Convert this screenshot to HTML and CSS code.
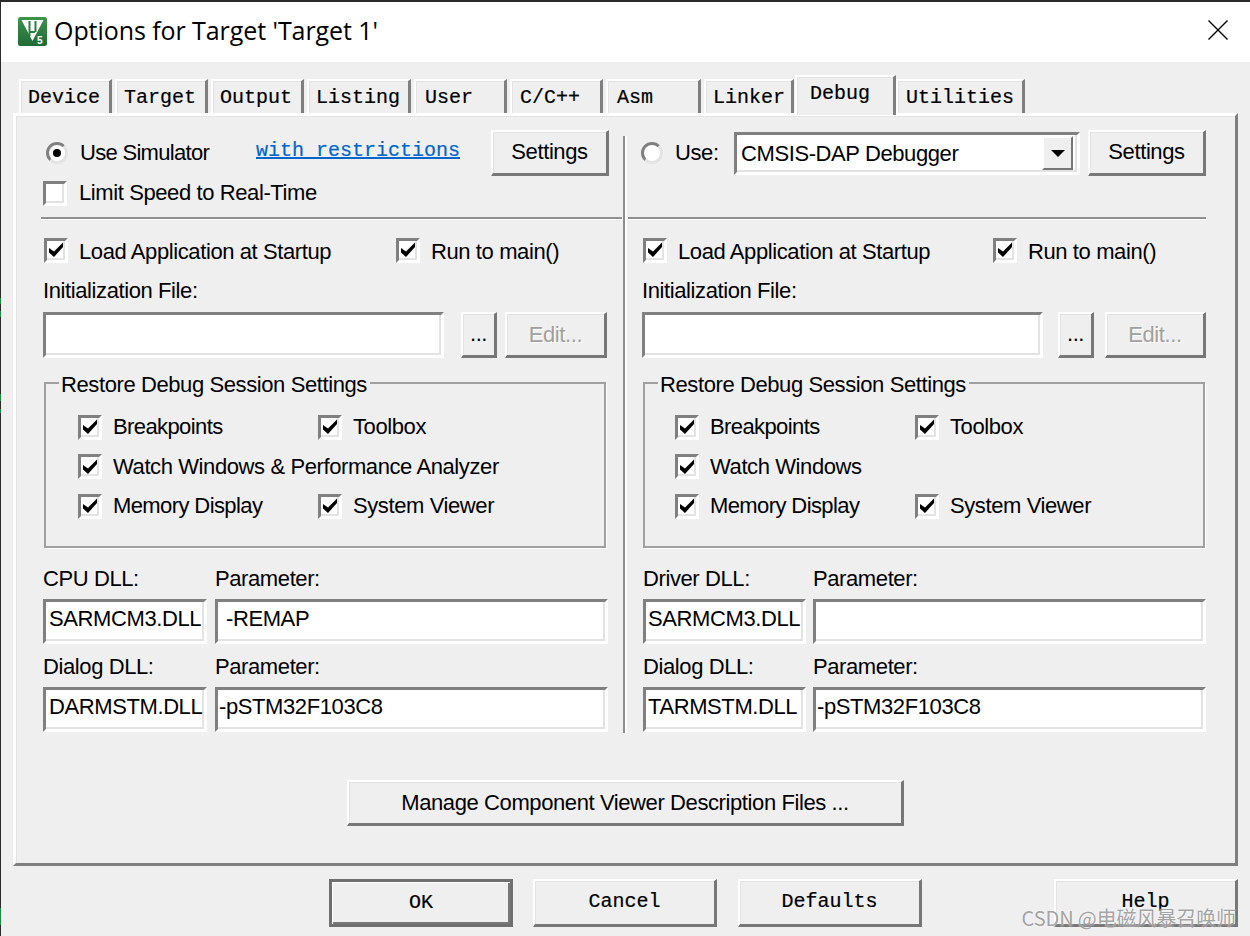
FILE: index.html
```html
<!DOCTYPE html>
<html lang="en">
<head>
<meta charset="utf-8">
<title>Options for Target 'Target 1'</title>
<link rel="stylesheet" href="styles.css">
</head>
<body>
<svg class="defs" width="0" height="0"><symbol id="tick" viewBox="0 0 16 16"><path d="M1 6 L1 10.5 L6 15 L15 5 L15 0.5 L6 9.5 Z" fill="#000"/></symbol></svg>
<div class="dialog">
  <span class="edge"></span>
  <header class="titlebar">
    <svg class="logo" viewBox="0 0 29 29">
      <defs><linearGradient id="lg" x1="0" y1="0" x2="0" y2="1"><stop offset="0" stop-color="#3c9449"/><stop offset="1" stop-color="#1f6b35"/></linearGradient></defs>
      <rect width="29" height="29" rx="2.5" fill="url(#lg)"/>
      <path d="M3.5 3 H25.5 L14.5 24 Z" fill="#fff"/>
      <path d="M11.5 4 V19 M11.5 15 H17 M17.5 4 V15" fill="none" stroke="#2a7f3f" stroke-width="2"/>
      <text x="19" y="27" class="logo5">5</text>
    </svg>
    <span class="title">Options for Target 'Target 1'</span>
    <svg class="close" viewBox="0 0 20 20"><path d="M0.5 0.5 L19.5 19.5 M19.5 0.5 L0.5 19.5" stroke="#000" stroke-width="1.4" fill="none"/></svg>
  </header>

  <nav class="tabs">
    <span class="tab w93">Device</span><span class="tab w94">Target</span><span class="tab w94">Output</span><span class="tab w104">Listing</span><span class="tab w94 pad9">User</span><span class="tab w94 pad8">C/C++</span><span class="tab w95 pad9">Asm</span><span class="tab w90">Linker</span><span class="tab tab-on">Debug</span><span class="tab w128 pad8">Utilities</span>
  </nav>

  <section class="panel">
    <div class="panes">
      <div class="pane pane-l">
        <div class="toprow">
          <span class="radio on"></span><span class="lbl sim">Use Simulator</span>
          <span class="link">with restrictions</span>
          <span class="btn settings">Settings</span>
        </div>
        <div class="row limit"><span class="check"></span><span class="lbl">Limit Speed to Real-Time</span></div>
        <hr class="rule">
        <div class="row load"><span class="check"><svg class="tick"><use href="#tick"/></svg></span><span class="lbl grow-l">Load Application at Startup</span><span class="check"><svg class="tick"><use href="#tick"/></svg></span><span class="lbl">Run to main()</span></div>
        <div class="lbl init">Initialization File:</div>
        <div class="filerow">
          <span class="field file"></span><span class="btn dots">...</span><span class="btn edit">Edit...</span>
        </div>
        <fieldset class="group">
          <legend class="legend">Restore Debug Session Settings</legend>
          <div class="gridrow"><span class="check"><svg class="tick"><use href="#tick"/></svg></span><span class="lbl g1">Breakpoints</span><span class="check"><svg class="tick"><use href="#tick"/></svg></span><span class="lbl">Toolbox</span></div>
          <div class="gridrow"><span class="check"><svg class="tick"><use href="#tick"/></svg></span><span class="lbl">Watch Windows &amp; Performance Analyzer</span></div>
          <div class="gridrow"><span class="check"><svg class="tick"><use href="#tick"/></svg></span><span class="lbl g1">Memory Display</span><span class="check"><svg class="tick"><use href="#tick"/></svg></span><span class="lbl">System Viewer</span></div>
        </fieldset>
        <div class="dlls">
          <span class="lbl">CPU DLL:</span><span class="lbl">Parameter:</span>
          <span class="field dll">SARMCM3.DLL</span><span class="field param indent">-REMAP</span>
          <span class="lbl">Dialog DLL:</span><span class="lbl">Parameter:</span>
          <span class="field dll">DARMSTM.DLL</span><span class="field param">-pSTM32F103C8</span>
        </div>
      </div>
      <div class="divider"></div>
      <div class="pane pane-r">
        <div class="toprow">
          <span class="radio"></span><span class="lbl use">Use:</span>
          <span class="field combo"><span class="combotext">CMSIS-DAP Debugger</span><span class="comboarrow"></span></span>
          <span class="btn settings">Settings</span>
        </div>
        <div class="row limit blank"></div>
        <hr class="rule">
        <div class="row load"><span class="check"><svg class="tick"><use href="#tick"/></svg></span><span class="lbl grow-l">Load Application at Startup</span><span class="check"><svg class="tick"><use href="#tick"/></svg></span><span class="lbl">Run to main()</span></div>
        <div class="lbl init">Initialization File:</div>
        <div class="filerow">
          <span class="field file"></span><span class="btn dots">...</span><span class="btn edit">Edit...</span>
        </div>
        <fieldset class="group">
          <legend class="legend">Restore Debug Session Settings</legend>
          <div class="gridrow"><span class="check"><svg class="tick"><use href="#tick"/></svg></span><span class="lbl g1">Breakpoints</span><span class="check"><svg class="tick"><use href="#tick"/></svg></span><span class="lbl">Toolbox</span></div>
          <div class="gridrow"><span class="check"><svg class="tick"><use href="#tick"/></svg></span><span class="lbl">Watch Windows</span></div>
          <div class="gridrow"><span class="check"><svg class="tick"><use href="#tick"/></svg></span><span class="lbl g1">Memory Display</span><span class="check"><svg class="tick"><use href="#tick"/></svg></span><span class="lbl">System Viewer</span></div>
        </fieldset>
        <div class="dlls">
          <span class="lbl">Driver DLL:</span><span class="lbl">Parameter:</span>
          <span class="field dll">SARMCM3.DLL</span><span class="field param"></span>
          <span class="lbl">Dialog DLL:</span><span class="lbl">Parameter:</span>
          <span class="field dll">TARMSTM.DLL</span><span class="field param">-pSTM32F103C8</span>
        </div>
      </div>
    </div>
    <div class="managerow"><span class="btn manage">Manage Component Viewer Description Files ...</span></div>
  </section>

  <footer class="actions">
    <span class="btn act ok mono">OK</span><span class="btn act cancel mono">Cancel</span><span class="btn act mono">Defaults</span><span class="btn act help mono">Help</span>
  </footer>
  <span class="watermark">CSDN @电磁风暴召唤师</span>
</div>
</body>
</html>
```
FILE: styles.css
```css
* { box-sizing: border-box; }
html, body { margin: 0; height: 100%; }
body { width: 1250px; height: 936px; overflow: hidden; background: #efefef; font-family: "Liberation Sans", Arial, sans-serif; color: #000; }
.defs { position: absolute; }
.dialog { position: relative; width: 1250px; height: 936px; border-top: 2px solid #2b2b2b; border-left: 1px solid #2b2b2b; background: #efefef; }
.edge { position: absolute; left: -1px; top: -2px; width: 1px; height: 936px; background: linear-gradient(#2b2b2b 0 298px, #1f8a3f 298px 304px, #2b2b2b 304px 311px, #1f8a3f 311px 317px, #2b2b2b 317px 394px, #1f8a3f 394px 401px, #2b2b2b 401px 409px, #1f8a3f 409px 413px, #2b2b2b 413px 908px, #1f8a3f 908px 925px, #2b2b2b 925px); }

.titlebar { height: 60px; background: #fff; display: flex; align-items: center; padding: 0 22px 0 17px; }
.logo { width: 29px; height: 29px; flex: none; margin-top: -2px; }
.logo5 { font: bold 10px "Liberation Sans", sans-serif; fill: #fff; }
.title { font: 25px "Open Sans", sans-serif; letter-spacing: -0.07px; margin-left: 7px; flex: 1; margin-top: -4px; white-space: nowrap; }
.close { width: 20px; height: 20px; margin-top: -4px; }

.tabs { display: flex; align-items: flex-end; height: 51px; padding-left: 18px; }
.tab { height: 34px; font: 20px/34px "Liberation Mono", monospace; -webkit-text-stroke: 0.2px #000; padding-left: 7px; margin-right: 3px; white-space: nowrap; border-top: 2px solid #fff; border-left: 2px solid #fff; border-right: 3px solid #7f7f7f; box-shadow: inset 1px 1px 0 #e3e3e3; }
.w93 { width: 93px; } .w94 { width: 93px; } .w95 { width: 95px; } .w90 { width: 90px; margin-right: 0; } .w104 { width: 104px; } .w128 { width: 129px; margin-right: 0; }
.pad8 { padding-left: 8px; } .pad9 { padding-left: 9px; }
.tab-on { width: 101px; height: 40px; line-height: 34px; padding-left: 13px; margin: 0 0 -2px 1px; background: #efefef; position: relative; z-index: 1; margin-right: 0; }

.panel { width: 1225px; height: 753px; margin-left: 12px; border: 3px solid; border-color: #fff #7f7f7f #7f7f7f #fff; box-shadow: inset 1px 1px 0 #e3e3e3; padding: 14px 28px 0 25px; }
.panes { display: flex; height: 600px; }
.pane-l { width: 582px; flex: none; }
.pane-r { width: 578px; flex: none; padding-left: 12px; }
.divider { width: 5px; flex: none; height: 597px; margin-top: 6px; background: linear-gradient(90deg, #8f8f8f 0 2px, #fff 2px 4px, #efefef 4px); }

.lbl { font-size: 22px; letter-spacing: -0.4px; line-height: 26px; white-space: nowrap; }
.toprow { display: flex; align-items: center; height: 46px; }
.radio { width: 22px; height: 22px; flex: none; border-radius: 50%; border: 3px solid; border-color: #808080 #e3e3e3 #e3e3e3 #808080; background: #fff; margin-left: 5px; display: flex; align-items: center; justify-content: center; }
.pane-r .radio { margin-left: 1px; }
.radio.on::after { content: ""; width: 8px; height: 8px; border-radius: 50%; background: #000; }
.sim { margin-left: 12px; width: 176px; letter-spacing: -0.7px; }
.link { font: 20px "Liberation Mono", monospace; -webkit-text-stroke: 0.2px #0066cc; color: #0066cc; text-decoration: underline; width: 235px; margin-top: -6px; }
.btn { display: flex; align-items: center; justify-content: center; border: 2px solid; border-color: #fff #777 #777 #fff; border-width: 2px 3px 3px 2px; box-shadow: inset 1px 1px 0 #e3e3e3; font-size: 22px; letter-spacing: -0.4px; background: #efefef; white-space: nowrap; flex: none; }
.settings { width: 118px; height: 46px; padding-bottom: 2px; }
.use { margin-left: 12px; width: 59px; }
.field { display: flex; align-items: center; flex: none; border: 3px solid; border-color: #808080 #fff #fff #808080; box-shadow: inset -2px -2px 0 #e3e3e3; background: #fff; font-size: 22px; letter-spacing: -0.4px; height: 46px; white-space: nowrap; }
.combo { width: 346px; height: 43px; margin-right: 8px; padding: 2px 4px 0 4px; justify-content: space-between; }
.comboarrow { width: 31px; height: 34px; flex: none; border: 2px solid; border-color: #fff #777 #777 #fff; background: #efefef; margin-top: -2px; display: flex; align-items: center; justify-content: center; }
.comboarrow::after { content: ""; border: 7px solid transparent; border-top: 7px solid #000; border-bottom: 0; }

.row { display: flex; align-items: center; }
.check { width: 24px; height: 25px; flex: none; border: 3px solid; border-color: #808080 #fff #fff #808080; box-shadow: inset -2px -2px 0 #e3e3e3; background: #fff; display: flex; align-items: center; justify-content: center; }
.tick { width: 16px; height: 16px; }
.limit { height: 28px; margin-top: 3px; margin-left: 2px; }
.limit .lbl { margin-left: 12px; }
.rule { height: 3px; border: 0; margin: 10px 0 0; background: linear-gradient(#8f8f8f 0 2px, #fff 2px); }
.pane-l .rule { margin-right: 1px; }
.pane-r .rule { margin-left: -12px; }
.load { height: 26px; margin-top: 19px; padding-left: 3px; }
.load .check { margin-top: -4px; }
.load .lbl { margin-left: 11px; }
.grow-l { width: 317px; }
.pane-r .grow-l { width: 315px; }
.init { margin-top: 13px; padding-left: 2px; }
.filerow { display: flex; margin-top: 8px; padding-left: 2px; }
.file { width: 401px; }
.dots { width: 36px; margin-left: 17px; height: 46px; padding-bottom: 2px; }
.edit { width: 102px; margin-left: 8px; height: 46px; color: #a0a0a0; text-shadow: 1px 1px 0 #fff; }
.pane-r .filerow .dots { margin-left: 15px; }
.pane-r .filerow .edit { margin-left: 11px; width: 101px; }

.group { width: 562px; height: 180px; margin: 10px 0 0 3px; padding: 16px 0 0 32px; border: 2px solid #a0a0a0; box-shadow: 1px 1px 0 #fff; position: relative; }
.pane-r .group { padding-left: 30px; }
.legend { font-size: 22px; letter-spacing: -0.4px; line-height: 26px; padding: 4px 3px 0 2px; margin-left: -19px; }
.pane-r .legend { margin-left: -17px; }
.gridrow { display: flex; align-items: center; height: 26px; margin-bottom: 13.5px; }
.gridrow .lbl { margin-left: 11px; }
.g1 { width: 205px; letter-spacing: -0.6px; }

.dlls { display: grid; grid-template-columns: 164px 393px; column-gap: 8px; margin: 19px 0 0 2px; }
.pane-r .dlls { margin-left: 3px; column-gap: 7px; grid-template-columns: 163px 393px; }
.dlls > .lbl { line-height: 24px; }
.dlls .dll { height: 46px; padding-left: 3px; }
.pane-r .dll { padding-left: 2px; }
.dlls .param { height: 46px; padding-left: 1px; }
.dlls .indent { padding-left: 8px; }
.dll, .param { padding-bottom: 6px; }
.dlls > .lbl:nth-child(n+5) { margin-top: 11px; }
.dlls > .field { margin-top: 8px; height: 45px; }

.managerow { display: flex; padding-left: 306px; margin-top: 50px; }
.manage { width: 557px; height: 46px; }

.actions { display: flex; margin: 13px 0 0 328px; }
.act { width: 184px; height: 48px; margin-right: 20px; }
.cancel { margin-right: 21px; }
.mono { font: 20px "Liberation Mono", monospace; letter-spacing: 0; -webkit-text-stroke: 0.2px #000; padding-bottom: 2px; }
.ok { border: 3px solid #6f6f6f; box-shadow: inset 1px 1px 0 #fff, inset -2px -2px 0 #777; }
.help { margin: 0 0 0 112px; }

.watermark { position: absolute; right: 14px; top: 901px; font: 20px "Noto Sans CJK SC", "Liberation Sans", sans-serif; letter-spacing: -0.1px; color: rgba(140,140,140,0.8); text-shadow: 0 0 2px #fff; white-space: nowrap; }
```
